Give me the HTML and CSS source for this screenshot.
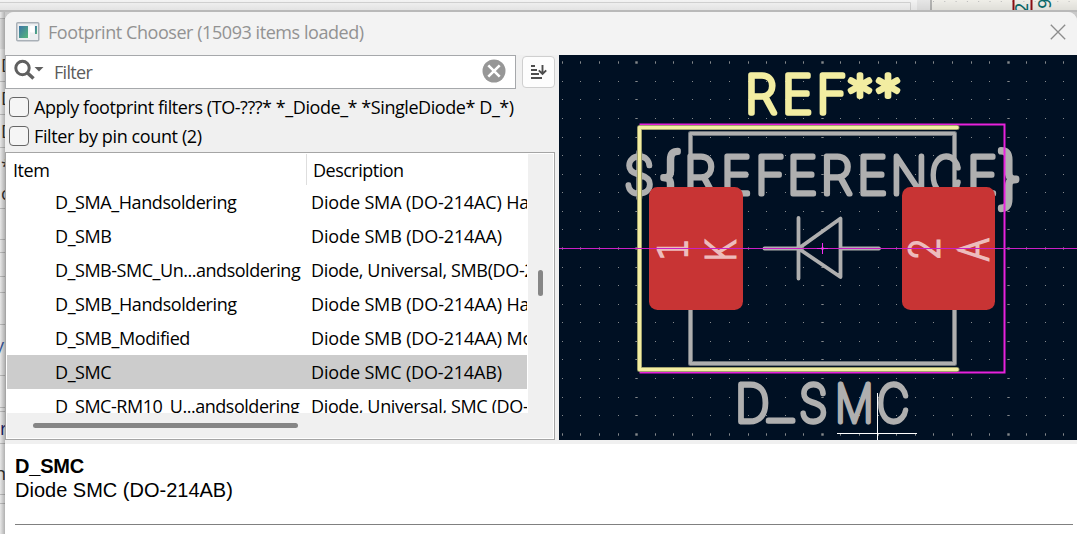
FILE: index.html
```
<!DOCTYPE html>
<html lang="en">
<head>
<meta charset="utf-8">
<title>Footprint Chooser</title>
<link rel="stylesheet" href="styles.css">
</head>
<body>
<div class="desktop">
  <svg class="backdrop-top" width="1077" height="12" viewBox="0 0 1077 12">
    <defs><linearGradient id="shade" x1="0" y1="0" x2="0" y2="1"><stop offset="0" stop-color="#000" stop-opacity="0"/><stop offset="1" stop-color="#000" stop-opacity=".08"/></linearGradient></defs>
    <rect width="1077" height="12" fill="#f3f3f3"/>
    <path d="M0 2.5H910.5V12" fill="none" stroke="#d2d2d2"/>
    <rect x="917" width="13" height="12" fill="#e6e6e6"/>
    <rect x="930" width="2" height="12" fill="#b4b4b2"/>
    <rect x="932" width="145" height="12" fill="#efeee8"/>
    <path d="M933 1.500H1077" stroke="#bbb" stroke-dasharray="1 10.3"/>
    <path d="M1013.500 0V12M1031.500 0V12" stroke="#8c0d12" stroke-width="2"/>
    <text class="pin" transform="translate(1028 13) rotate(-90)">2</text>
    <text class="pin" transform="translate(1051 9) rotate(-90)">9</text>
    <rect width="1077" height="12" fill="url(#shade)"/>
    <rect y="10" width="1077" height="2" fill="#b9b9b9"/>
  </svg>
  <div class="lower">
    <svg class="backdrop-left" width="5" height="522" viewBox="0 12 5 522">
      <defs><linearGradient id="edge"><stop offset="0" stop-color="#000" stop-opacity="0"/><stop offset="1" stop-color="#000" stop-opacity=".24"/></linearGradient></defs>
      <rect y="12" width="5" height="522" fill="#e8e8e8"/>
      <rect y="19" width="5" height="30" fill="#d9d9d9"/>
      <path d="M0 18.500H5M0 81.500H5M0 114.500H5M0 147.500H5M0 208.500H5M0 239.500H5M0 252.500H5M0 276.500H5M0 292.500H5M0 324.500H5M0 375.500H5M0 407.500H5M0 411.500H5M0 443.500H5M0 494.500H5M0 503.500H5" stroke="#bcbcbc"/>
      <g class="peek"><text x="1" y="72">D</text><text x="1" y="105">D</text><text x="1" y="138">D</text><text x="1" y="173">*</text><text x="1" y="200">c</text><text x="-5" y="352" fill="#36569b">y</text><text x="0" y="435" fill="#171766">r</text><text x="-5" y="480">n</text></g>
      <rect y="12" width="5" height="522" fill="url(#edge)"/>
    </svg>
    <section class="window">
      <header class="titlebar">
        <svg class="app-icon" width="24" height="20" viewBox="0 0 24 20">
          <defs><linearGradient id="screen" x1="0" y1="0" x2="1" y2="1"><stop offset="0" stop-color="#3c74a8"/><stop offset="1" stop-color="#58b87a"/></linearGradient></defs>
          <rect x=".75" y=".75" width="22" height="18" rx="1" fill="#eceef0" stroke="#a9b0b7" stroke-width="1.500"/>
          <rect x="3" y="4" width="9" height="12" fill="url(#screen)"/>
          <path d="M13 4V16M14.500 4H18V10H14.500Z" stroke="#fff" fill="#fff"/>
          <rect x="19" y="4" width="2" height="8" fill="url(#screen)"/>
        </svg>
        <h1>Footprint Chooser (15093 items loaded)</h1>
        <svg class="close" width="16" height="16" viewBox="0 0 16 16"><path d="M.8.8 15.200 15.200M15.200.8.8 15.200" stroke="#8c8c8c" stroke-width="1.300"/></svg>
      </header>
      <main class="content">
        <div class="chooser">
          <div class="search-row">
            <div class="search">
              <svg width="30" height="24" viewBox="0 0 30 24"><circle cx="8.500" cy="9" r="6.700" fill="none" stroke="#606060" stroke-width="3"/><path d="M13 13.500 19.500 19.500" stroke="#606060" stroke-width="3.500"/><path d="M20.500 8H29.500L25 12.500Z" fill="#606060"/></svg>
              <span class="placeholder">Filter</span>
              <svg width="24" height="24" viewBox="0 0 24 24"><circle cx="12" cy="12" r="11.500" fill="#979797"/><path d="M6.300 6.300 17.700 17.700M17.700 6.300 6.300 17.700" stroke="#fff" stroke-width="2.600"/></svg>
            </div>
            <div class="sort">
              <svg width="17" height="16" viewBox="0 0 17 16"><path d="M1 2H5M1 6H7M1 10H9M1 14H12" stroke="#4d4d4d" stroke-width="2"/><path d="M12.500 1V10M8.800 6.300 12.500 10 16.200 6.300" fill="none" stroke="#4d4d4d" stroke-width="1.900"/></svg>
            </div>
          </div>
          <div class="check"><i class="box"></i><span class="apply">Apply footprint filters (TO-???* *_Diode_* *SingleDiode* D_*)</span></div>
          <div class="check"><i class="box"></i><span class="pins">Filter by pin count (2)</span></div>
          <div class="list">
            <div class="table">
              <div class="row head"><span>Item</span><span>Description</span></div>
              <div class="rows">
                <div class="row"><span>D_SMA_Handsoldering</span><span>Diode SMA (DO-214AC) Handsoldering</span></div>
                <div class="row"><span>D_SMB</span><span>Diode SMB (DO-214AA)</span></div>
                <div class="row universal"><span>D_SMB-SMC_Un...andsoldering</span><span>Diode, Universal, SMB(DO-214AA)</span></div>
                <div class="row"><span>D_SMB_Handsoldering</span><span>Diode SMB (DO-214AA) Handsoldering</span></div>
                <div class="row"><span>D_SMB_Modified</span><span>Diode SMB (DO-214AA) Modified</span></div>
                <div class="row selected"><span>D_SMC</span><span>Diode SMC (DO-214AB)</span></div>
                <div class="row universal"><span>D_SMC-RM10_U...andsoldering</span><span>Diode, Universal, SMC (DO-214AB)</span></div>
              </div>
            </div>
            <div class="vscroll"><i></i></div>
            <div class="hscroll"><i></i></div>
          </div>
        </div>
        <svg class="board" width="518" height="385" viewBox="559 55 518 385">
          <rect x="559" y="55" width="518" height="385" fill="#001023"/>
          <g id="grid" fill="#85898c"></g>
          <path class="halo" d="M690.500 188V133.500H954.500V188M690.500 308V363.500H954.500V308"/>
          <path class="fab" d="M690.500 188V133.500H954.500V188M690.500 308V363.500H954.500V308"/>
          <path class="fab thin" d="M764.500 248.500H798M798.500 218V278.500M798.500 248.500 840.500 218.500V277L798.500 248.500M841 248.500H879"/>
          <g class="stroke-text fabtext">
            <text transform="translate(624 194) scale(.95 1)">$</text>
            <text transform="translate(658 197) scale(1.200 1.150)">{</text>
            <text y="194" x="684 721 755 787 820.500 857">REFERE</text>
            <text transform="translate(890.500 194) scale(.92 1)">N</text>
            <text transform="translate(929.500 194) scale(.86 1)">C</text>
            <text y="194" x="967">E</text>
            <text transform="translate(996 200) scale(1.250 1.250)">}</text>
            <text transform="translate(735 422) scale(.93 1)">D</text>
            <text transform="translate(768.500 420) scale(1.080 1)">_</text>
            <text transform="translate(799 422) scale(.9 1)">S</text>
            <text transform="translate(835 422) scale(.83 1)">M</text>
            <text transform="translate(877 422) scale(.86 1)">C</text>
          </g>
          <path d="M640.500 124.500H1004.500V372.500H640.500Z" fill="none" stroke="#e721dc" stroke-width="2"/>
          <path class="silk-halo" d="M957 127.500H639.500V369.500H957"/>
          <path class="silk" d="M957 127.500H639.500V369.500H957"/>
          <text class="stroke-text silktext" y="113" x="745 782 816.500 847 875">REF**</text>
          <rect x="649" y="187" width="94" height="123" rx="8.500" fill="#c83434"/>
          <rect x="902" y="187" width="93" height="123" rx="8.500" fill="#c83434"/>
          <g class="padtext">
            <text class="serif-one" transform="translate(687 260.500) rotate(-90) scale(.9 1)">1</text>
            <text transform="translate(735 261.500) rotate(-90) scale(.88 1)">K</text>
            <text transform="translate(939 260) rotate(-90) scale(.9 1)">2</text>
            <text transform="translate(987.500 261) rotate(-90) scale(.88 1)">A</text>
          </g>
          <path d="M559 248.500H1077" stroke="#cb1fc4"/>
          <path d="M817 248.500H828M822.500 243V254" stroke="#f52cf0"/>
          <path d="M837 433.500H917M877.500 393V440" stroke="#fff"/>
        </svg>
      </main>
      <footer class="details"><b>D_SMC</b><p>Diode SMC (DO-214AB)</p><hr></footer>
    </section>
  </div>
</div>
<script src="grid.js"></script>
</body>
</html>
```
FILE: grid.js
```
const grid = document.getElementById('grid');
const pitch = 18.58;
for (let i = -14; i <= 13; i++) {
  for (let j = -10; j <= 10; j++) {
    const r = document.createElementNS('http://www.w3.org/2000/svg', 'rect');
    const wide = i % 10 === 0, tall = j % 10 === 0;
    r.setAttribute('x', Math.floor(822.4 + i * pitch) - (wide ? 1 : 0) + (wide ? 0.3 : 0));
    r.setAttribute('y', Math.floor(248.5 + j * pitch) - (tall ? 1 : 0) + (tall ? 0.3 : 0));
    r.setAttribute('width', wide ? 2.4 : 1);
    r.setAttribute('height', tall ? 2.4 : 1);
    grid.append(r);
  }
}
```
FILE: styles.css
```
* { box-sizing: border-box; }
body { margin: 0; overflow: hidden; background: #c9c9c9; color: #000; font: 18px/34px "Open Sans", "Noto Sans", sans-serif; }
svg { display: block; flex: none; }
.desktop { width: 1077px; height: 534px; display: flex; flex-direction: column; }
.lower { display: flex; height: 522px; }
.pin { font: 17px "DejaVu Sans", sans-serif; fill: #0b6b6b; }
.peek { font: 18px "Open Sans", sans-serif; fill: #333; }
.window { width: 1072px; display: flex; flex-direction: column; overflow: hidden; background: #f0f0f0; border-radius: 9px 9px 0 0; }
.titlebar { height: 43px; display: flex; align-items: center; padding: 0 11px 4px 11px; background: #f3f3f3; }
h1 { flex: 1; margin: 0 0 0 8px; font-size: 18px; font-weight: 400; color: #929292; letter-spacing: -.44px; white-space: nowrap; }
.content { display: flex; height: 385px; gap: 4px; }
.chooser { width: 550px; display: flex; flex-direction: column; }
.search-row { display: flex; gap: 6px; height: 37px; align-items: flex-start; }
.search { width: 511px; height: 34px; border: 1px solid #a6a8ab; background: #fff; display: flex; align-items: center; padding: 0 9px 2px 8px; }
.placeholder { flex: 1; margin-left: 10px; padding-top: 2px; color: #5c5c5c; letter-spacing: -.7px; }
.sort { width: 33px; height: 32px; margin-top: 1px; border: 1px solid #cfcfcf; border-radius: 4px; background: #fdfdfd; display: grid; place-items: center; }
.check { height: 29px; display: flex; align-items: center; gap: 5px; padding-left: 4px; white-space: nowrap; letter-spacing: -.43px; }
.pins { letter-spacing: -.38px; }
.box { width: 20px; height: 20px; border: 1px solid #666; border-radius: 4px; background: #f5f5f5; }
.list { margin-top: 2px; height: 288px; border: 1px solid #a5a5a5; padding: 1px; background: #fff; display: grid; grid-template: 259px 1fr / 521px 1fr; }
.table { overflow: hidden; }
.row { display: grid; grid-template-columns: 299px 221px; width: 520px; height: 34px; white-space: nowrap; letter-spacing: -.42px; }
.row span { overflow: hidden; padding-left: 5px; }
.row:not(.head) span:last-child { letter-spacing: -.14px; }
.row span:first-child { padding-left: 48px; }
.row.universal span:first-child { letter-spacing: -.47px; }
.row.universal span:last-child { letter-spacing: -.36px; }
.row.head { height: 31px; line-height: 33px; }
.head span:first-child { padding-left: 6px; border-right: 1px solid #dedede; width: 300px; }
.head span:last-child { padding-left: 7px; letter-spacing: -.5px; }
.selected { background: #ccc; }
.vscroll { background: #f0f0f0; padding: 116px 0 0 10px; }
.vscroll i { display: block; width: 5px; height: 26px; border-radius: 3px; background: #868686; }
.hscroll { grid-column: 1 / 3; background: #f0f0f0; padding: 10px 0 0 26px; }
.hscroll i { display: block; width: 265px; height: 5px; border-radius: 3px; background: #868686; }
.halo, .fab, .silk, .silk-halo { fill: none; stroke-linecap: round; stroke-linejoin: round; }
.halo { stroke: #6e747a; stroke-width: 5; }
.fab { stroke: #afafaf; stroke-width: 3; }
.fab.thin { stroke-width: 3.8; }
.silk { stroke: #f2eda1; stroke-width: 3.4; }
.silk-halo { stroke: #87895e; stroke-width: 5; }
.stroke-text { font: 100 52px Inter, sans-serif; stroke-width: 5; stroke-linejoin: round; stroke-linecap: round; }
.fabtext { fill: #afafaf; stroke: #afafaf; }
.silktext { fill: #f2eda1; stroke: #f2eda1; stroke-width: 5.4; }
.padtext { font: 100 40px Inter, sans-serif; fill: #edbcbc; stroke: #edbcbc; stroke-width: 3; }
.serif-one { font: 200 39px "DejaVu Sans", sans-serif; stroke-width: 2.400; }
.details { flex: 1; margin-top: 4px; padding: 10px 4px 0 10px; background: #fff; font: 20px/24px "Liberation Sans", Arial, sans-serif; }
.details b { display: block; letter-spacing: -.2px; }
.details p { margin: 0; }
.details hr { margin: 22px 0 0; border: 0; border-top: 1px solid #808080; }
```
